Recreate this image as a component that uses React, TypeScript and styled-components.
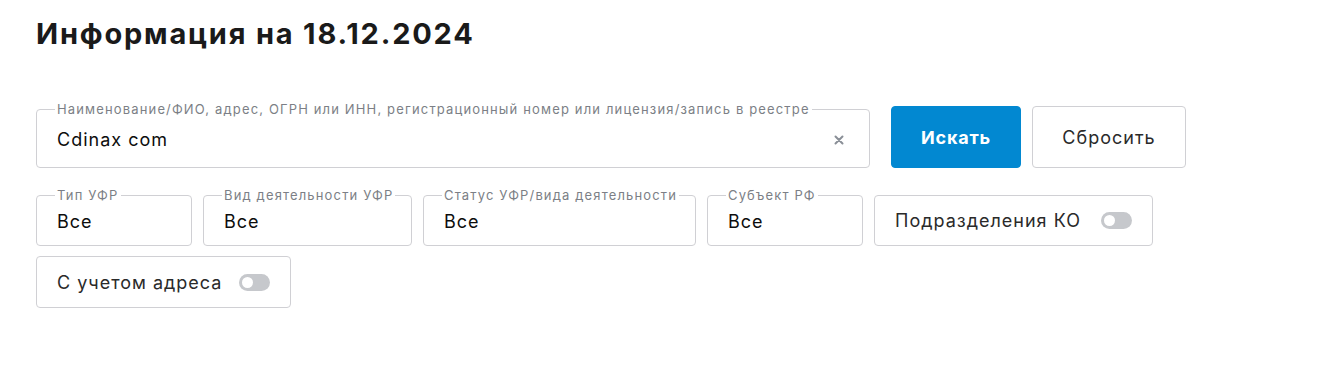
import React, { useState } from 'react';
import styled, { createGlobalStyle } from 'styled-components';

const GlobalStyle = createGlobalStyle`
  body {
    margin: 0;
    background: #fff;
    font-family: Inter, "Noto Sans", sans-serif;
    color: #1a1a1a;
  }
`;

const Page = styled.div`
  padding: 16px 36px 0;
  width: 1150px;
`;

const Title = styled.h1`
  margin: 0 0 49px;
  font-size: 29px;
  line-height: 36px;
  font-weight: 700;
  color: #1a1a1a;
  letter-spacing: 1.8px;
`;

const TopRow = styled.div`
  display: flex;
  align-items: flex-end;
  gap: 11px;
  margin-bottom: 19px;
`;

interface FieldProps {
  $width?: number;
  $grow?: boolean;
}

const Field = styled.fieldset<FieldProps>`
  margin: 0;
  padding: 0 20px;
  min-width: 0;
  box-sizing: border-box;
  border: 1px solid #d0d0d4;
  border-radius: 4px;
  width: ${p => (p.$width ? `${p.$width}px` : 'auto')};
  flex: ${p => (p.$grow ? '1 1 auto' : '0 0 auto')};
  display: flex;
  align-items: center;
`;

const Legend = styled.legend`
  margin-left: -2px;
  padding: 0 2px;
  font-size: 13px;
  line-height: 16px;
  letter-spacing: 1.15px;
  color: #7c7f86;
  white-space: nowrap;
`;

interface ValueProps {
  $height: number;
}

const Value = styled.div<ValueProps>`
  flex: 1;
  height: ${p => p.$height}px;
  display: flex;
  align-items: center;
  font-size: 18px;
  letter-spacing: 1px;
  color: #0d0d0d;
  padding-bottom: 5px;
  box-sizing: border-box;
`;

const TextInput = styled.input`
  flex: 1;
  border: none;
  outline: none;
  padding: 0;
  font-family: inherit;
  font-size: 18px;
  letter-spacing: 1px;
  color: #0d0d0d;
  background: transparent;
`;

const ClearButton = styled.button`
  border: none;
  background: none;
  padding: 0;
  margin-right: 2px;
  width: 16px;
  height: 16px;
  display: flex;
  align-items: center;
  justify-content: center;
  cursor: pointer;
`;

interface ButtonProps {
  $primary?: boolean;
  $width: number;
}

const Button = styled.button<ButtonProps>`
  flex: 0 0 auto;
  width: ${p => p.$width}px;
  height: 62px;
  border-radius: 4px;
  font-family: inherit;
  font-size: 18px;
  letter-spacing: ${p => (p.$primary ? '0.8px' : '1px')};
  font-weight: ${p => (p.$primary ? 700 : 400)};
  color: ${p => (p.$primary ? '#fff' : '#2a2a2a')};
  background: ${p => (p.$primary ? '#0288d1' : '#fff')};
  border: 1px solid ${p => (p.$primary ? '#0288d1' : '#d0d0d4')};
  cursor: pointer;
`;

const SearchButton = styled(Button)`
  margin-left: 10px;
`;

const Filters = styled.div`
  display: flex;
  flex-wrap: wrap;
  align-items: flex-end;
  column-gap: 11px;
  row-gap: 10px;
`;

interface ToggleBoxProps {
  $width: number;
  $height: number;
}

const ToggleBox = styled.label<ToggleBoxProps>`
  box-sizing: border-box;
  width: ${p => p.$width}px;
  height: ${p => p.$height}px;
  border: 1px solid #d0d0d4;
  border-radius: 4px;
  padding: 0 20px;
  display: flex;
  align-items: center;
  justify-content: space-between;
  font-size: 18px;
  letter-spacing: 1px;
  color: #2a2a2a;
  cursor: pointer;
`;

interface SwitchProps {
  $on: boolean;
}

const Switch = styled.span<SwitchProps>`
  position: relative;
  width: 31px;
  height: 17px;
  border-radius: 9px;
  background: ${p => (p.$on ? '#0288d1' : '#c6c8cc')};
  flex: 0 0 auto;

  &::after {
    content: '';
    position: absolute;
    top: 3px;
    left: ${p => (p.$on ? '17px' : '3px')};
    width: 11px;
    height: 11px;
    border-radius: 50%;
    background: #fff;
  }
`;

const Toggle = ({ label, width, height }: { label: string; width: number; height: number }) => {
  const [on, setOn] = useState(false);
  return (
    <ToggleBox $width={width} $height={height} onClick={() => setOn(!on)}>
      {label}
      <Switch $on={on} />
    </ToggleBox>
  );
};

const selects = [
  { label: 'Тип УФР', width: 156 },
  { label: 'Вид деятельности УФР', width: 209 },
  { label: 'Статус УФР/вида деятельности', width: 273 },
  { label: 'Субъект РФ', width: 156 },
];

const App = () => {
  const [query, setQuery] = useState('Cdinax com');

  return (
    <Page>
      <GlobalStyle />
      <Title>Информация на 18.12.2024</Title>
      <TopRow>
        <Field $grow>
          <Legend>Наименование/ФИО, адрес, ОГРН или ИНН, регистрационный номер или лицензия/запись в реестре</Legend>
          <Value $height={50}>
            <TextInput value={query} onChange={e => setQuery(e.target.value)} />
            <ClearButton onClick={() => setQuery('')} aria-label="Очистить">
              <svg width="10" height="10" viewBox="0 0 10 10">
                <path d="M1.5 1.5 L8.5 8.5 M8.5 1.5 L1.5 8.5" stroke="#8a8f97" strokeWidth="2" strokeLinecap="round" />
              </svg>
            </ClearButton>
          </Value>
        </Field>
        <SearchButton $primary $width={130}>Искать</SearchButton>
        <Button $width={154}>Сбросить</Button>
      </TopRow>
      <Filters>
        {selects.map(s => (
          <Field key={s.label} $width={s.width}>
            <Legend>{s.label}</Legend>
            <Value $height={42}>Все</Value>
          </Field>
        ))}
        <Toggle label="Подразделения КО" width={279} height={51} />
        <Toggle label="С учетом адреса" width={255} height={52} />
      </Filters>
    </Page>
  );
};

export default App;
